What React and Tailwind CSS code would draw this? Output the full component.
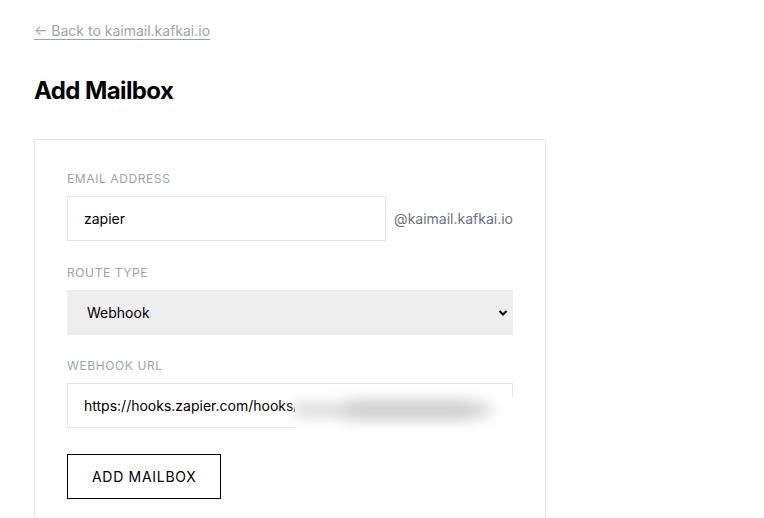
export default function App() {
  return (
    <div
      className="min-h-screen bg-white px-[34px] pt-[18px] text-black"
      style={{ fontFamily: "Inter, 'Noto Sans', sans-serif" }}
    >
      <a href="#" className="text-sm leading-5 text-[#9ca3af] underline underline-offset-[3px] decoration-[#9ca3af]">
        ← Back to kaimail.kafkai.io
      </a>

      <h1 className="mt-[33px] text-2xl leading-8 font-bold tracking-tight">Add Mailbox</h1>

      <div className="mt-[32px] w-[512px] border border-[#e8e8e8] px-8 pt-[30px] pb-10">
        {/* Email */}
        <label className="block text-xs leading-[18px] tracking-wider text-[#9ca3af] uppercase mb-2">
          Email address
        </label>
        <div className="flex items-center">
          <input
            className="h-[45px] flex-1 border border-[#e5e5e5] px-4 text-sm text-black outline-none"
            defaultValue="zapier"
          />
          <span className="ml-2 text-sm text-[#6b7280]">@kaimail.kafkai.io</span>
        </div>

        {/* Route type */}
        <label className="mt-[23px] block text-xs leading-[18px] tracking-wider text-[#9ca3af] uppercase mb-2">
          Route type
        </label>
        <div className="relative">
          <select className="h-[45px] w-full appearance-none bg-[#eeeeee] pl-5 text-sm text-black outline-none">
            <option>Webhook</option>
          </select>
          <svg
            className="pointer-events-none absolute right-[5px] top-1/2 -translate-y-1/2"
            width="10"
            height="8"
            viewBox="0 0 10 8"
          >
            <path d="M1.5 2 L5 5.5 L8.5 2" fill="none" stroke="#000" strokeWidth="2" />
          </svg>
        </div>

        {/* Webhook URL */}
        <label className="mt-[22px] block text-xs leading-[18px] tracking-wider text-[#9ca3af] uppercase mb-2">
          Webhook URL
        </label>
        <div className="relative">
          <input
            className="h-[45px] w-full border border-[#e5e5e5] px-4 text-sm text-black outline-none"
            defaultValue="https://hooks.zapier.com/hooks/catch/0000000/abcdefg/"
          />
          {/* redacted part of the url */}
          <div className="absolute left-[228px] top-[14px] h-[37px] w-[224px] bg-white">
            <div className="absolute left-[-2px] top-[6px] h-[14px] w-[200px] rounded-full bg-[#dadada] blur-[7px]"></div>
            <div className="absolute left-[50px] top-[7px] h-[12px] w-[130px] rounded-full bg-[#c8c8c8] blur-[8px]"></div>
          </div>
        </div>

        <button className="mt-[26px] h-[45px] border border-black px-6 text-sm tracking-[0.05em] text-black">
          ADD MAILBOX
        </button>
      </div>
    </div>
  );
}
